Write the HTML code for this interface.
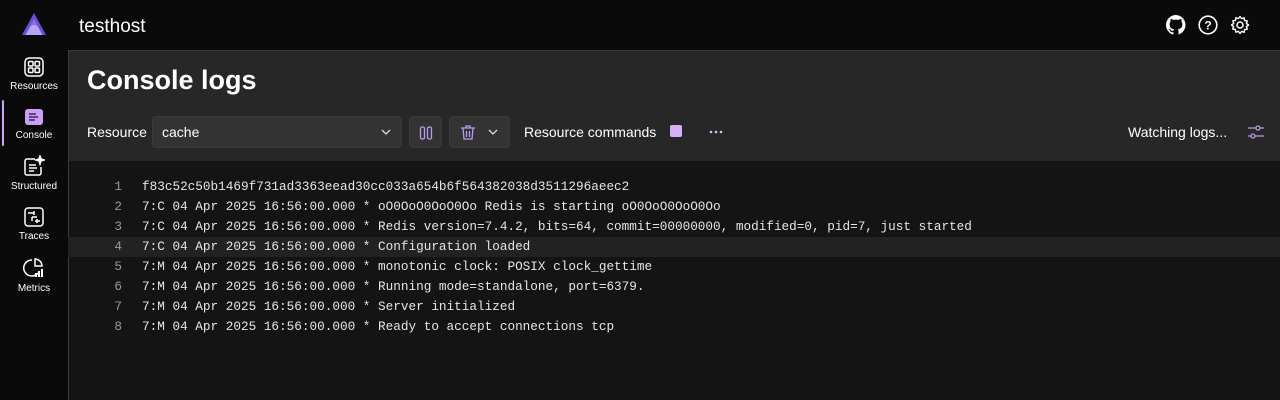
<!DOCTYPE html>
<html><head><style>
*{box-sizing:border-box;margin:0;padding:0}
body{width:1280px;height:400px;background:#0a0a0a;font-family:"Liberation Sans",sans-serif;color:#fff;position:relative;overflow:hidden}
.top{position:absolute;left:0;top:0;width:1280px;height:50px}
.host{position:absolute;left:79px;top:16px;font-size:19px}
.side{position:absolute;left:0;top:50px;width:68px}
.nav{position:absolute;left:0;width:68px;text-align:center;font-size:10px;color:#fff}
.nav svg{display:block;margin:0 auto 4px}
.main{position:absolute;left:68px;top:50px;width:1212px;height:350px;background:#141414;border-top:1px solid #3a3a3a;border-left:1px solid #3a3a3a}
.hdr{position:absolute;left:0;top:0;width:1212px;height:110px;background:#272727}
h1{position:absolute;left:18px;top:14px;font-size:27px;font-weight:bold}
.lbl{position:absolute;font-size:14px;top:73px}
.box{position:absolute;top:65px;height:32px;background:#333;border-radius:4px;border:1px solid #3a3a3a}
.log{position:absolute;left:-1px;top:126px;font-family:"Liberation Mono",monospace;font-size:12.7px;color:#e6e6e6}
.row{height:20px;line-height:20px;position:relative;width:1213px}
.row .n{position:absolute;right:1159px;color:#9a9a9a}
.row .t{position:absolute;left:74px;white-space:pre}
.hl{background:#222}
</style></head><body>
<div class="top">
<svg style="position:absolute;left:22px;top:13px" width="24" height="22" viewBox="0 0 24 22"><path d="M12 0L24 22H0Z" fill="#6b4fd8"/><path d="M12 6L21 22H3Z" fill="#8a6ee8"/><path d="M8 14a5 5 0 0 1 8 0l4 8H4Z" fill="#b8a4f4"/></svg>
<div class="host">testhost</div>
<svg style="position:absolute;left:1166px;top:15px" width="20" height="20" viewBox="0 0 16 16"><path fill="#fff" d="M8 0a8 8 0 0 0-2.5 15.6c.4 0 .5-.2.5-.4v-1.5c-2.2.5-2.7-1-2.7-1-.4-.9-.9-1.2-.9-1.2-.7-.5.1-.5.1-.5.8.1 1.2.8 1.2.8.7 1.3 1.9.9 2.3.7.1-.5.3-.9.5-1.1-1.8-.2-3.6-.9-3.6-4 0-.9.3-1.6.8-2.1-.1-.2-.4-1 .1-2.1 0 0 .7-.2 2.2.8a7.5 7.5 0 0 1 4 0c1.5-1 2.2-.8 2.2-.8.4 1.1.2 1.9.1 2.1.5.6.8 1.3.8 2.1 0 3.1-1.9 3.700-3.6 3.9.3.3.5.8.5 1.5v2.2c0 .2.1.5.6.4A8 8 0 0 0 8 0z"/></svg>
<svg style="position:absolute;left:1198px;top:15px" width="20" height="20" viewBox="0 0 20 20"><circle cx="10" cy="10" r="8.8" fill="none" stroke="#fff" stroke-width="1.6"/><text x="10" y="14.5" font-size="12" font-family="Liberation Sans" font-weight="bold" text-anchor="middle" fill="#fff">?</text></svg>
<svg style="position:absolute;left:1230px;top:15px" width="20" height="20" viewBox="0 0 20 20"><circle cx="10" cy="10" r="3" fill="none" stroke="#fff" stroke-width="1.5"/><path d="M10 1.5l1.6 2.2 2.6-.9.4 2.7 2.7.4-.9 2.6 2.2 1.5-2.2 1.6.9 2.6-2.7.4-.4 2.7-2.6-.9L10 18.5l-1.6-2.2-2.6.9-.4-2.7-2.7-.4.9-2.6L1.5 10l2.2-1.6-.9-2.6 2.7-.4.4-2.7 2.6.9z" fill="none" stroke="#fff" stroke-width="1.4" stroke-linejoin="round"/></svg>
</div>
<div class="side">
<div class="nav" style="top:7px"><svg width="20" height="20" viewBox="0 0 20 20" fill="none" stroke="#fff" stroke-width="1.5"><rect x="1" y="1" width="18" height="18" rx="4"/><rect x="4.5" y="4.5" width="4.5" height="4.5" rx="1"/><rect x="11" y="4.5" width="4.5" height="4.5" rx="1"/><rect x="4.5" y="11" width="4.5" height="4.5" rx="1"/><rect x="11" y="11" width="4.5" height="4.5" rx="1"/></svg>Resources</div>
<div style="position:absolute;left:2px;top:50px;width:2px;height:46px;background:#c9a8f8;border-radius:1px"></div>
<div class="nav" style="top:58px"><svg width="20" height="18" viewBox="0 0 20 18"><rect x="1" y="1" width="18" height="16" rx="3" fill="#c9a0f5"/><path d="M5 6h7M5 9h9M5 12h6" stroke="#3a2460" stroke-width="1.5"/></svg>Console</div>
<div class="nav" style="top:105px"><svg width="22" height="22" viewBox="0 0 22 22" fill="none" stroke="#fff" stroke-width="1.5"><path d="M12 4H4a2 2 0 0 0-2 2v12a2 2 0 0 0 2 2h12a2 2 0 0 0 2-2v-6"/><path d="M6 10h7M6 13h8M6 16h5"/><path d="M17 1l1 3 3 1-3 1-1 3-1-3-3-1 3-1z" fill="#fff"/></svg>Structured</div>
<div class="nav" style="top:157px"><svg width="20" height="20" viewBox="0 0 20 20" fill="none" stroke="#fff" stroke-width="1.5"><rect x="1" y="1" width="18" height="18" rx="3"/><path d="M4 6h6M10 4v4M8 10h5M8 10v4M11 14h5M13 12v4"/></svg>Traces</div>
<div class="nav" style="top:207px"><svg width="22" height="22" viewBox="0 0 22 22" fill="none" stroke="#fff" stroke-width="1.5"><path d="M9 3a8 8 0 1 0 6 13"/><path d="M12 2v7h7a7 7 0 0 0-7-7z"/><path d="M13 20v-4M16 20v-6M19 20v-8" stroke-width="2"/></svg>Metrics</div>
</div>
<div class="main">
<div class="hdr">
<h1>Console logs</h1>
<div class="lbl" style="left:18px">Resource</div>
<div class="box" style="left:83px;width:250px"><span style="position:absolute;left:9px;top:7px;font-size:14px">cache</span><svg style="position:absolute;right:10px;top:11px" width="10" height="8" viewBox="0 0 10 8"><path d="M1 2l4 4 4-4" fill="none" stroke="#ddd" stroke-width="1.3"/></svg></div>
<div class="box" style="left:340px;width:33px"><svg style="position:absolute;left:9px;top:8px" width="14" height="16" viewBox="0 0 14 16" fill="none" stroke="#b59cf0" stroke-width="1.3"><rect x="1.5" y="2" width="4" height="12" rx="1.5"/><rect x="8.5" y="2" width="4" height="12" rx="1.5"/></svg></div>
<div class="box" style="left:380px;width:61px"><svg style="position:absolute;left:10px;top:7px" width="16" height="17" viewBox="0 0 16 17" fill="none" stroke="#b59cf0" stroke-width="1.3"><path d="M1 4h14M6 4V2h4v2M3 4l1 11h8l1-11M6.5 7v6M9.5 7v6"/></svg><svg style="position:absolute;left:38px;top:11px" width="10" height="8" viewBox="0 0 10 8"><path d="M1 2l4 4 4-4" fill="none" stroke="#ddd" stroke-width="1.3"/></svg></div>
<div class="lbl" style="left:455px">Resource commands</div>
<div style="position:absolute;left:601px;top:74px;width:12px;height:12px;background:#d5aef8;border-radius:2px"></div>
<svg style="position:absolute;left:640px;top:79px" width="14" height="4" viewBox="0 0 14 4" fill="#d0c4f8"><circle cx="2" cy="2" r="1.3"/><circle cx="7" cy="2" r="1.3"/><circle cx="12" cy="2" r="1.3"/></svg>
<div class="lbl" style="left:1059px">Watching logs...</div>
<svg style="position:absolute;left:1178px;top:72px" width="18" height="18" viewBox="0 0 18 18" fill="none" stroke="#b59cf0" stroke-width="1.3"><path d="M1 5h16M1 13h16"/><circle cx="11" cy="5" r="2" fill="#272727"/><circle cx="6" cy="13" r="2" fill="#272727"/></svg>
</div>
<div class="log">
<div class="row"><span class="n">1</span><span class="t">f83c52c50b1469f731ad3363eead30cc033a654b6f564382038d3511296aeec2</span></div>
<div class="row"><span class="n">2</span><span class="t">7:C 04 Apr 2025 16:56:00.000 * oO0OoO0OoO0Oo Redis is starting oO0OoO0OoO0Oo</span></div>
<div class="row"><span class="n">3</span><span class="t">7:C 04 Apr 2025 16:56:00.000 * Redis version=7.4.2, bits=64, commit=00000000, modified=0, pid=7, just started</span></div>
<div class="row hl"><span class="n">4</span><span class="t">7:C 04 Apr 2025 16:56:00.000 * Configuration loaded</span></div>
<div class="row"><span class="n">5</span><span class="t">7:M 04 Apr 2025 16:56:00.000 * monotonic clock: POSIX clock_gettime</span></div>
<div class="row"><span class="n">6</span><span class="t">7:M 04 Apr 2025 16:56:00.000 * Running mode=standalone, port=6379.</span></div>
<div class="row"><span class="n">7</span><span class="t">7:M 04 Apr 2025 16:56:00.000 * Server initialized</span></div>
<div class="row"><span class="n">8</span><span class="t">7:M 04 Apr 2025 16:56:00.000 * Ready to accept connections tcp</span></div>
</div>
</div>
</body></html>
